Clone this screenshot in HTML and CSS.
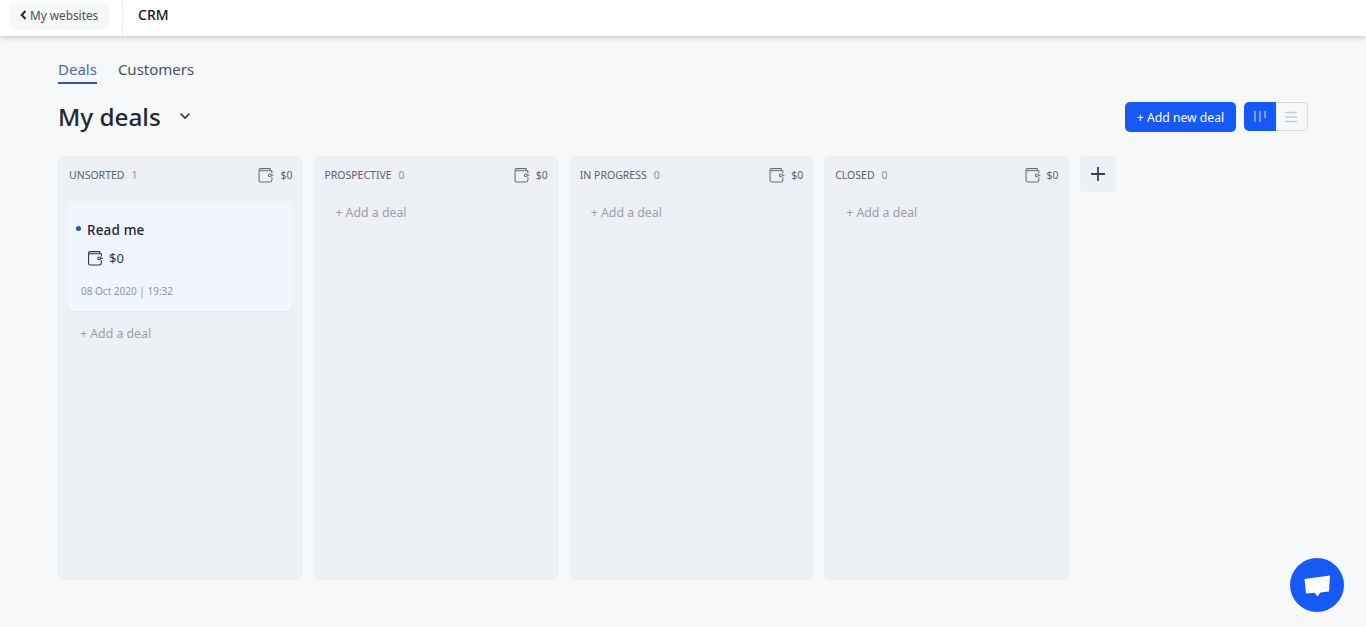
FILE: index.html
```
<!DOCTYPE html>
<html lang="en">
<head>
<meta charset="utf-8">
<title>CRM</title>
<link rel="stylesheet" href="styles.css">
</head>
<body>
<header class="topbar">
  <a class="back"><svg class="back-icon" width="7" height="10" viewBox="0 0 7 10"><path d="M5.500 1 1.700 5l3.800 4" fill="none" stroke="#1f2733" stroke-width="2"/></svg>My websites</a>
  <div class="app-name">CRM</div>
</header>
<main class="page">
  <nav class="tabs">
    <a class="tab tab-active">Deals</a>
    <a class="tab">Customers</a>
  </nav>
  <div class="titlebar">
    <h1 class="title">My deals</h1>
    <svg class="title-chevron" width="12" height="8" viewBox="0 0 12 8"><path d="M1.500 1.500 6 6l4.500-4.500" fill="none" stroke="#2a313d" stroke-width="1.600"/></svg>
    <div class="actions">
      <button class="add-btn">+ Add new deal</button>
      <div class="toggle">
        <span class="toggle-item toggle-on"><svg width="14" height="14" viewBox="0 0 14 14"><path d="M2 1v11M7 1v11M12 1v7" fill="none" stroke="#dbe6ff" stroke-width="1"/></svg></span>
        <span class="toggle-item"><svg width="12" height="12" viewBox="0 0 12 12"><path d="M0 1.500h12M0 6h12M0 10.500h12" fill="none" stroke="#c9ced6" stroke-width="1.500"/></svg></span>
      </div>
    </div>
  </div>
  <section class="board">
    <div class="col">
      <div class="col-head">
        <span class="col-name">UNSORTED</span><span class="col-count">1</span>
        <svg class="wallet" width="16" height="16" viewBox="0 0 15 15"><path d="M11.500 3.500V1.500H2.500Q1 1.500 1 3v9.500Q1 14 2.500 14h9Q13 14 13 12.500V9.500M1 3Q1 3.500 2.500 3.500H13V6M11 7.800h3.500" fill="none" stroke="#6a717d" stroke-width="1"/><circle cx="11" cy="7.800" r="1.300" fill="#eef1f5" stroke="#6a717d"/></svg>
        <span class="col-sum">$0</span>
      </div>
      <article class="card">
        <div class="card-title"><span class="dot"></span>Read me</div>
        <div class="card-sum">
          <svg class="wallet-lg" width="17" height="16" viewBox="0 0 15 15"><path d="M11.500 3.500V1.500H2.500Q1 1.500 1 3v9.500Q1 14 2.500 14h9Q13 14 13 12.500V9.500M1 3Q1 3.500 2.500 3.500H13V6M11 7.800h3.500" fill="none" stroke="#2c3340" stroke-width="1"/><circle cx="11" cy="7.800" r="1.300" fill="#f1f5fd" stroke="#2c3340"/></svg>
          $0
        </div>
        <div class="card-date">08 Oct 2020 | 19:32</div>
      </article>
      <a class="add-deal add-deal-after">+ Add a deal</a>
    </div>
    <div class="col">
      <div class="col-head">
        <span class="col-name">PROSPECTIVE</span><span class="col-count">0</span>
        <svg class="wallet" width="16" height="16" viewBox="0 0 15 15"><path d="M11.500 3.500V1.500H2.500Q1 1.500 1 3v9.500Q1 14 2.500 14h9Q13 14 13 12.500V9.500M1 3Q1 3.500 2.500 3.500H13V6M11 7.800h3.500" fill="none" stroke="#6a717d" stroke-width="1"/><circle cx="11" cy="7.800" r="1.300" fill="#eef1f5" stroke="#6a717d"/></svg>
        <span class="col-sum">$0</span>
      </div>
      <a class="add-deal">+ Add a deal</a>
    </div>
    <div class="col">
      <div class="col-head">
        <span class="col-name">IN PROGRESS</span><span class="col-count">0</span>
        <svg class="wallet" width="16" height="16" viewBox="0 0 15 15"><path d="M11.500 3.500V1.500H2.500Q1 1.500 1 3v9.500Q1 14 2.500 14h9Q13 14 13 12.500V9.500M1 3Q1 3.500 2.500 3.500H13V6M11 7.800h3.500" fill="none" stroke="#6a717d" stroke-width="1"/><circle cx="11" cy="7.800" r="1.300" fill="#eef1f5" stroke="#6a717d"/></svg>
        <span class="col-sum">$0</span>
      </div>
      <a class="add-deal">+ Add a deal</a>
    </div>
    <div class="col">
      <div class="col-head">
        <span class="col-name">CLOSED</span><span class="col-count">0</span>
        <svg class="wallet" width="16" height="16" viewBox="0 0 15 15"><path d="M11.500 3.500V1.500H2.500Q1 1.500 1 3v9.500Q1 14 2.500 14h9Q13 14 13 12.500V9.500M1 3Q1 3.500 2.500 3.500H13V6M11 7.800h3.500" fill="none" stroke="#6a717d" stroke-width="1"/><circle cx="11" cy="7.800" r="1.300" fill="#eef1f5" stroke="#6a717d"/></svg>
        <span class="col-sum">$0</span>
      </div>
      <a class="add-deal">+ Add a deal</a>
    </div>
    <button class="add-col"><svg width="16" height="16" viewBox="0 0 16 16"><path d="M8 1v14M1 8h14" fill="none" stroke="#3a424f" stroke-width="1.800"/></svg></button>
  </section>
</main>
<button class="chat"><svg width="27" height="22" viewBox="0 0 27 22"><path d="M0.500 4 26 0.500 25 16.500 16.500 17.500 13.500 21.500 10.500 17.800 2 18.500Z" fill="#fff"/></svg></button>
</body>
</html>
```
FILE: styles.css
```
* { box-sizing: border-box; }
html, body { height: 100%; }
body {
  margin: 0;
  background: #f6f8fa;
  color: #1f2733;
  font-family: "Noto Sans", "Open Sans", sans-serif;
  overflow: hidden;
}
.topbar {
  height: 36px;
  background: #fff;
  display: flex;
  box-shadow: 0 1px 6px rgba(40, 50, 70, 0.28);
}
.back {
  margin: 2px 0 0 9px;
  width: 100px;
  height: 27px;
  border-radius: 5px;
  background: #f6f8fa;
  color: #4a515e;
  font-size: 11.800px;
  display: flex;
  align-items: center;
  padding: 0 0 2px 11px;
  gap: 3px;
}
.app-name {
  margin-left: 13px;
  padding-left: 15px;
  border-left: 1px solid #eceef2;
  height: 36px;
  line-height: 30px;
  font-size: 14px;
  font-weight: 500;
  color: #111820;
}
.page { padding: 0 58px; }
.tabs {
  display: flex;
  gap: 21px;
  padding-top: 22px;
  height: 48px;
}
.tab {
  font-size: 15px;
  line-height: 22px;
  height: 26px;
  color: #4a515e;
}
.tab-active {
  color: #4a69a8;
  border-bottom: 2px solid #2a56b0;
}
.titlebar {
  display: flex;
  align-items: center;
  height: 48px;
  margin-top: 10px;
}
.title {
  margin: 0 0 2px;
  font-size: 24.300px;
  font-weight: 500;
  line-height: 46px;
  color: #1f2733;
}
.title-chevron { margin: -4px 0 0 18px; }
.actions {
  margin-left: auto;
  display: flex;
  align-items: flex-start;
  gap: 8px;
  height: 30px;
  margin-top: -2px;
}
.add-btn {
  width: 111px;
  height: 30px;
  border: 0;
  border-radius: 5px;
  background: #1659f5;
  color: #fff;
  font: 12.200px "Noto Sans", sans-serif;
  padding: 0;
}
.toggle {
  display: flex;
  width: 64px;
  height: 29px;
}
.toggle-item {
  flex: 1;
  display: flex;
  align-items: center;
  justify-content: center;
  border: 1px solid #d7dbe2;
  border-left: 0;
  border-radius: 0 5px 5px 0;
}
.toggle-on {
  background: #1659f5;
  border: 0;
  border-radius: 5px 0 0 5px;
}
.board {
  display: flex;
  gap: 11px;
  margin-top: 14px;
}
.col {
  width: 244.400px;
  height: 424px;
  background: #edf0f4;
  border-radius: 6px;
  padding: 0 10px;
}
.col-head {
  display: flex;
  align-items: center;
  height: 37px;
  font-size: 10.500px;
  color: #5a616d;
  padding: 1px 0 0 1px;
}
.col-name { color: #5a616d; }
.col-count { margin-left: 7px; color: #8c929c; }
.wallet { margin-left: auto; margin-right: 6px; }
.col-sum { color: #5a616d; }
.card {
  margin-top: 10px;
  height: 108px;
  background: #f1f5fd;
  border-radius: 6px;
  box-shadow: 0 1px 2px rgba(60, 80, 120, 0.06);
  position: relative;
}
.card-title {
  padding: 17px 0 0 19px;
  font-size: 13.500px;
  line-height: 20px;
  font-weight: 500;
  letter-spacing: 0.15px;
  color: #1f2733;
  position: relative;
}
.dot {
  position: absolute;
  left: 8px;
  top: 23px;
  width: 5px;
  height: 5px;
  border-radius: 50%;
  background: #1f55c8;
}
.card-sum {
  display: flex;
  align-items: center;
  gap: 5px;
  margin: 8px 0 0 19px;
  font-size: 13px;
  line-height: 20px;
  color: #2c3340;
}
.card-date {
  margin: 15px 0 0 13px;
  font-size: 10px;
  line-height: 16px;
  color: #8f95a0;
}
.add-deal {
  display: block;
  margin: 11px 0 0 12px;
  font-size: 12.300px;
  line-height: 18px;
  color: #9aa0aa;
}
.add-deal-after { margin-top: 14px; }
.add-col {
  width: 36px;
  height: 36px;
  padding: 0;
  border: 0;
  border-radius: 5px;
  background: #edf0f4;
  display: flex;
  align-items: center;
  justify-content: center;
}
.chat {
  position: fixed;
  left: 1290px;
  top: 558px;
  width: 54px;
  height: 54px;
  border: 0;
  border-radius: 50%;
  background: #1659f5;
  display: flex;
  align-items: center;
  justify-content: center;
  padding: 2px 0 0;
}
```
